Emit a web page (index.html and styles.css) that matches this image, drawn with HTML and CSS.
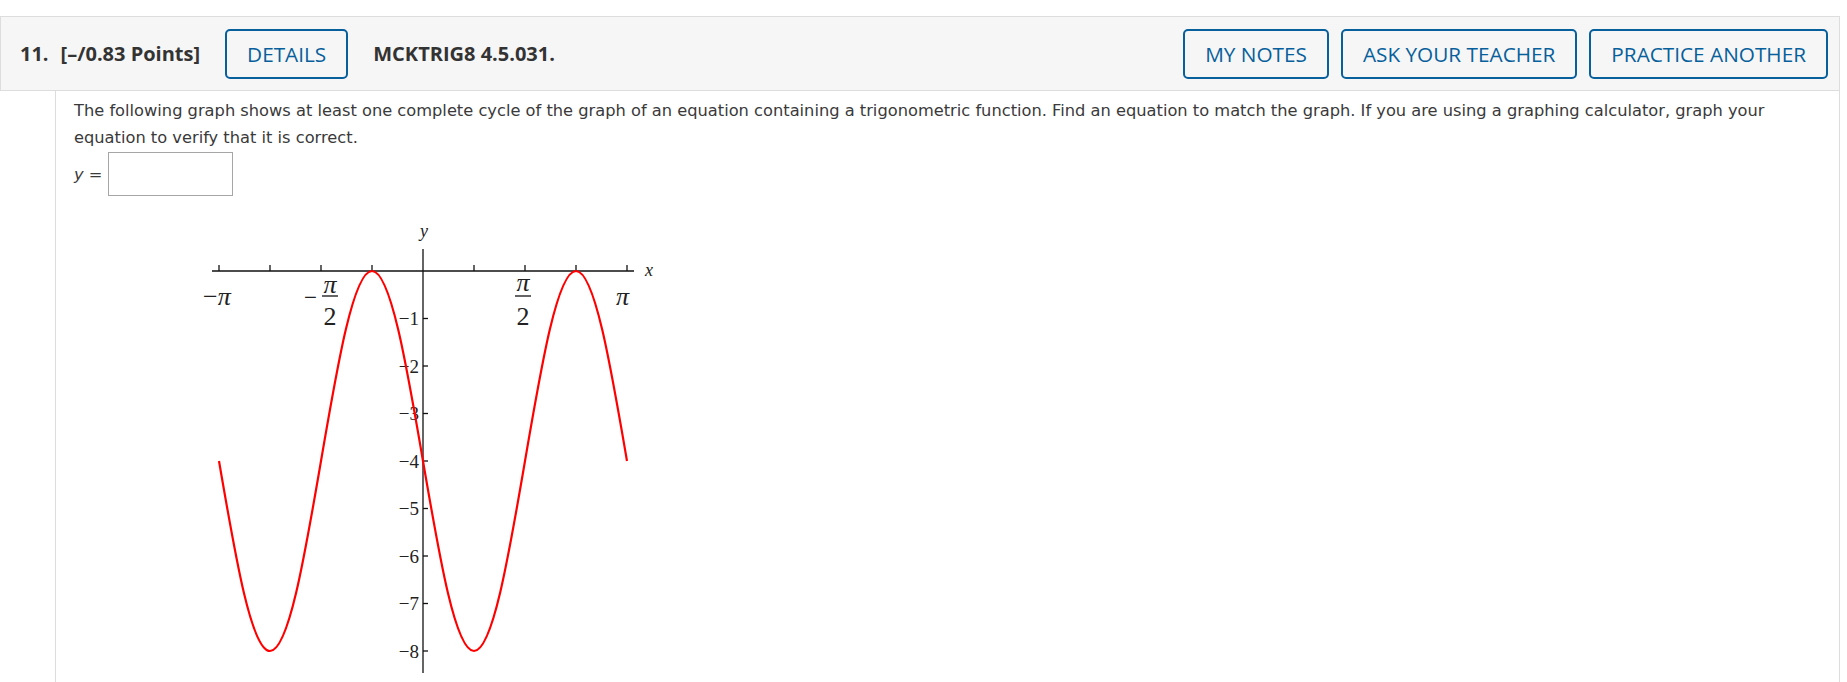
FILE: index.html
```html
<!DOCTYPE html>
<html lang="en">
<head>
<meta charset="utf-8">
<title>Question 11</title>
<link rel="stylesheet" href="styles.css">
</head>
<body>
<div class="page">
  <div class="qheader">
    <div class="qleft">
      <span class="qnum">11.</span>
      <span class="qpts">[–/0.83 Points]</span>
      <button class="qbtn" type="button">DETAILS</button>
      <span class="qcode">MCKTRIG8 4.5.031.</span>
    </div>
    <div class="qright">
      <button class="qbtn" type="button">MY NOTES</button>
      <button class="qbtn" type="button">ASK YOUR TEACHER</button>
      <button class="qbtn" type="button">PRACTICE ANOTHER</button>
    </div>
  </div>
  <div class="qbody">
    <p class="qtext">The following graph shows at least one complete cycle of the graph of an equation containing a trigonometric function. Find an equation to match the graph. If you are using a graphing calculator, graph your equation to verify that it is correct.</p>
    <div class="answer">
      <span class="alabel"><i>y</i> =</span>
      <input class="abox" type="text" aria-label="answer">
    </div>
    <svg class="graph" width="470" height="462" viewBox="195 220 470 462" xmlns="http://www.w3.org/2000/svg">
      <g class="axes">
        <line x1="212" y1="271" x2="634" y2="271"/>
        <line x1="423" y1="249" x2="423" y2="673"/>
        <line x1="219" y1="265" x2="219" y2="271"/>
        <line x1="270" y1="265" x2="270" y2="271"/>
        <line x1="321" y1="265" x2="321" y2="271"/>
        <line x1="372" y1="265" x2="372" y2="271"/>
        <line x1="474" y1="265" x2="474" y2="271"/>
        <line x1="525" y1="265" x2="525" y2="271"/>
        <line x1="576" y1="265" x2="576" y2="271"/>
        <line x1="627" y1="265" x2="627" y2="271"/>
        <line x1="423" y1="318.5" x2="428" y2="318.5"/>
        <line x1="423" y1="366" x2="428" y2="366"/>
        <line x1="423" y1="413.5" x2="428" y2="413.5"/>
        <line x1="423" y1="461" x2="428" y2="461"/>
        <line x1="423" y1="508.5" x2="428" y2="508.5"/>
        <line x1="423" y1="556" x2="428" y2="556"/>
        <line x1="423" y1="603.5" x2="428" y2="603.5"/>
        <line x1="423" y1="651" x2="428" y2="651"/>
        <line x1="322" y1="296" x2="338" y2="296"/>
        <line x1="515" y1="296" x2="531" y2="296"/>
      </g>
      <g class="lbl">
        <text class="var" x="424" y="237">y</text>
        <text class="var" x="649" y="276">x</text>
        <text class="pi" x="203" y="305">−<tspan class="pig">π</tspan></text>
        <text class="pi" x="616" y="305"><tspan class="pig">π</tspan></text>
        <text class="minus" x="304" y="305">−</text>
        <text class="frac pig" x="330" y="293">π</text>
        <text class="frac" x="330" y="325">2</text>
        <text class="frac pig" x="523" y="291">π</text>
        <text class="frac" x="523" y="325">2</text>
      </g>
      <g class="ylbl">
        <text x="419" y="325">−1</text>
        <text x="419" y="372.5">−2</text>
        <text x="419" y="420">−3</text>
        <text x="419" y="467.5">−4</text>
        <text x="419" y="515">−5</text>
        <text x="419" y="562.5">−6</text>
        <text x="419" y="610">−7</text>
        <text x="419" y="657.5">−8</text>
      </g>
      <path class="curve" d="M219 461 C235.63 558.34 251.54 651 270 651 C288.46 651 304.37 558.34 321 461 C337.63 363.66 353.54 271 372 271 C390.46 271 406.37 363.66 423 461 C439.63 558.34 455.54 651 474 651 C492.46 651 508.37 558.34 525 461 C541.63 363.66 557.54 271 576 271 C594.46 271 610.37 363.66 627 461"/>
    </svg>
  </div>
</div>
</body>
</html>
```
FILE: styles.css
```css
html, body {
  margin: 0;
  padding: 0;
  background: #ffffff;
}

.page {
  width: 1840px;
  padding-top: 16px;
}

.qheader {
  box-sizing: border-box;
  height: 75px;
  background: #f6f6f6;
  border: 1px solid #dddddd;
  display: flex;
  align-items: center;
  justify-content: space-between;
  padding: 0 11px 0 19px;
  font-family: "Open Sans", "Liberation Sans", sans-serif;
  color: #333333;
}

.qleft {
  display: flex;
  align-items: center;
}

.qnum,
.qpts,
.qcode {
  font-size: 20px;
  font-weight: 700;
  white-space: nowrap;
}

.qpts {
  margin-left: 12px;
}

.qleft .qbtn {
  margin: 0 25px;
}

.qright {
  display: flex;
  align-items: center;
  gap: 12px;
}

.qbtn {
  box-sizing: border-box;
  height: 50px;
  padding: 0 20px;
  background: transparent;
  border: 2px solid #07609b;
  border-radius: 5px;
  color: #07609b;
  font-family: "Open Sans", "Liberation Sans", sans-serif;
  font-size: 20.75px;
  font-weight: 400;
  white-space: nowrap;
  cursor: pointer;
}

.qbody {
  box-sizing: border-box;
  margin-left: 55px;
  min-height: 620px;
  border-left: 1px solid #dddddd;
  border-right: 1px solid #dddddd;
  padding: 6px 30px 0 18px;
  font-family: "DejaVu Sans", Verdana, sans-serif;
  font-size: 16.25px;
  color: #3a3a3a;
}

.qtext {
  margin: 0;
  line-height: 27px;
}

.answer {
  display: flex;
  align-items: center;
  gap: 6px;
  margin-top: 1px;
}

.alabel {
  white-space: nowrap;
}

.abox {
  box-sizing: border-box;
  width: 125px;
  height: 44px;
  border: 1px solid #a6a6a6;
  background: #ffffff;
  margin: 0;
  padding: 0 6px;
}

.graph {
  display: block;
  margin: 24px 0 0 121px;
}

.axes line {
  stroke: #111111;
  stroke-width: 1.3;
}

.lbl text,
.ylbl text {
  font-family: "Liberation Serif", "DejaVu Serif", serif;
  fill: #222222;
}

.var {
  font-style: italic;
  font-size: 18px;
  text-anchor: middle;
}

.pi {
  font-size: 26px;
}

.minus {
  font-size: 23px;
}

.pig {
  font-style: italic;
}

.frac {
  font-size: 26px;
  text-anchor: middle;
}

.ylbl text {
  font-size: 19px;
  text-anchor: end;
}

.curve {
  fill: none;
  stroke: #ff0000;
  stroke-width: 2.2;
}
```
